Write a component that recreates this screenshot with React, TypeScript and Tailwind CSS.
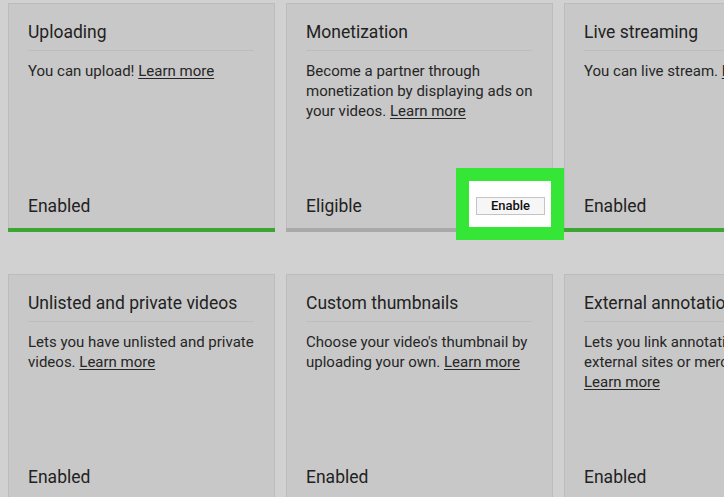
import React from 'react';

type Feature = {
  title: string;
  text: string;
  status: string;
  bar: 'green' | 'gray' | 'none';
  action?: boolean;
};

const ROW_ONE: Feature[] = [
  { title: 'Uploading', text: 'You can upload!', status: 'Enabled', bar: 'green' },
  {
    title: 'Monetization',
    text: 'Become a partner through monetization by displaying ads on your videos.',
    status: 'Eligible',
    bar: 'gray',
    action: true,
  },
  { title: 'Live streaming', text: 'You can live stream.', status: 'Enabled', bar: 'green' },
];

const ROW_TWO: Feature[] = [
  { title: 'Unlisted and private videos', text: 'Lets you have unlisted and private videos.', status: 'Enabled', bar: 'none' },
  { title: 'Custom thumbnails', text: "Choose your video's thumbnail by uploading your own.", status: 'Enabled', bar: 'none' },
  {
    title: 'External annotations',
    text: 'Lets you link annotations to external sites or merchandise.',
    status: 'Enabled',
    bar: 'none',
  },
];

const FeatureCard: React.FC<{ feature: Feature }> = ({ feature }) => {
  const barColor =
    feature.bar === 'green' ? 'bg-[#3da532]' : feature.bar === 'gray' ? 'bg-[#a9a9a9]' : 'bg-transparent';

  return (
    <div className="relative flex h-[229px] w-[267px] shrink-0 flex-col border border-[#bcbcbc] bg-[#c8c8c8]">
      <div className="pl-[19px] pr-5 pt-4">
        <h3 className="border-b border-[#bdbdbd] pb-[6px] text-[17.5px] leading-6 text-[#222]">{feature.title}</h3>
        <p className="-mr-2 mt-[10px] text-[15px] leading-5 text-[#262626]">
          {feature.text} <a className="underline underline-offset-2">Learn more</a>
        </p>
      </div>

      <div className="mt-auto flex items-center pb-[10px] pl-[19px] pr-[7px]">
        <span className="text-[17.5px] leading-6 text-[#222]">{feature.status}</span>
        {feature.action && (
          <div className="relative z-10 ml-auto">
            {/* highlight box drawn round the button */}
            <span className="absolute -bottom-[25px] -left-[20px] -right-[19px] -top-[29px] border-[13px] border-[#36e636] bg-white" />
            <button className="relative flex h-[18px] w-[69px] items-center justify-center border border-[#c4c4c4] bg-[#f6f6f6] text-[13px] font-medium text-[#111]">
              Enable
            </button>
          </div>
        )}
      </div>
      <div className={`-mx-px -mb-px h-1 ${barColor}`} />
    </div>
  );
};

const App: React.FC = () => {
  return (
    <div
      className="h-[497px] w-[724px] overflow-hidden bg-[#d1d1d1] pl-2 pt-[3px]"
      style={{ fontFamily: 'Roboto, "Liberation Sans", sans-serif' }}
    >
      <div className="flex gap-[11px]">
        {ROW_ONE.map((f) => (
          <FeatureCard key={f.title} feature={f} />
        ))}
      </div>
      <div className="mt-[42px] flex gap-[11px]">
        {ROW_TWO.map((f) => (
          <FeatureCard key={f.title} feature={f} />
        ))}
      </div>
    </div>
  );
};

export default App;
